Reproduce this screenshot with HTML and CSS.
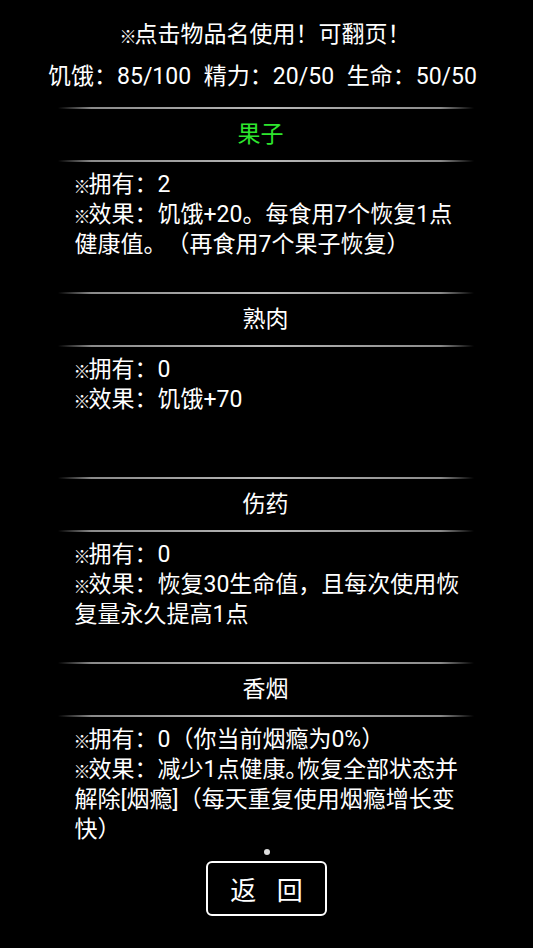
FILE: index.html
```html
<!DOCTYPE html>
<html lang="zh-CN">
<head>
<meta charset="utf-8">
<title>物品</title>
<link rel="stylesheet" href="styles.css">
</head>
<body>
<div class="page">
  <div class="title"><span class="mark">※</span>点击物品名使用！可翻页！</div>
  <div class="stats">饥饿：85/100 精力：20/50 生命：50/50</div>
  <div class="items">
    <section class="item">
      <div class="divider"></div>
      <div class="name green">果子</div>
      <div class="divider"></div>
      <div class="desc">
        <p><span class="mark">※</span>拥有：2</p>
        <p><span class="mark">※</span>效果：饥饿+20。每食用7个恢复1点健康值。（再食用7个果子恢复）</p>
      </div>
    </section>
    <section class="item">
      <div class="divider"></div>
      <div class="name">熟肉</div>
      <div class="divider"></div>
      <div class="desc">
        <p><span class="mark">※</span>拥有：0</p>
        <p><span class="mark">※</span>效果：饥饿+70</p>
      </div>
    </section>
    <section class="item">
      <div class="divider"></div>
      <div class="name">伤药</div>
      <div class="divider"></div>
      <div class="desc">
        <p><span class="mark">※</span>拥有：0</p>
        <p><span class="mark">※</span>效果：恢复30生命值，且每次使用恢复量永久提高1点</p>
      </div>
    </section>
    <section class="item">
      <div class="divider"></div>
      <div class="name">香烟</div>
      <div class="divider"></div>
      <div class="desc">
        <p><span class="mark">※</span>拥有：0（你当前烟瘾为0%）</p>
        <p><span class="mark">※</span>效果：减少1点健康｡恢复全部状态并解除[烟瘾]（每天重复使用烟瘾增长变快）</p>
      </div>
    </section>
  </div>
  <div class="dot"></div>
  <div class="btn-row"><div class="back">返 回</div></div>
</div>
</body>
</html>
```
FILE: styles.css
```css
html, body {
  margin: 0;
  padding: 0;
  background: #000;
}
body {
  width: 533px;
  height: 948px;
  overflow: hidden;
  color: #fff;
  font-family: Roboto, "Noto Sans CJK SC", sans-serif;
  font-size: 23px;
  text-spacing-trim: space-all;
}
.page {
  padding-top: 20px;
  display: flex;
  flex-direction: column;
  align-items: center;
}
.mark {
  display: inline-block;
  width: 14px;
  font-size: 14px;
  line-height: 14px;
  font-weight: bold;
  text-align: center;
  font-family: "Noto Sans CJK SC", sans-serif;
  transform: scale(1.22);
}
.title {
  line-height: 30px;
  text-align: center;
  padding-right: 2px;
}
.stats {
  margin-top: 12px;
  line-height: 30px;
  text-align: center;
  word-spacing: 7px;
  padding-right: 8px;
}
.items {
  margin-top: 15px;
  width: 416px;
  margin-left: -2px;
}
.divider {
  height: 2px;
  background: linear-gradient(to right, rgba(150,150,150,0) 0%, #8a8a8a 8%, #b8b8b8 50%, #8a8a8a 92%, rgba(150,150,150,0) 100%);
}
.name {
  height: 51px;
  line-height: 51px;
  text-align: center;
}
.green {
  color: #2ee62e;
  padding-right: 10px;
}
.desc {
  height: 130px;
  box-sizing: border-box;
  padding: 8px 0 0 17px;
  width: 406px;
}
.desc p {
  margin: 0;
  line-height: 30px;
}
.dot {
  margin-top: 2px;
  width: 6px;
  height: 6px;
  border-radius: 50%;
  background: #ddd;
}
.btn-row {
  margin-top: 6px;
  display: flex;
  justify-content: center;
}
.back {
  width: 121px;
  height: 55px;
  box-sizing: border-box;
  border: 2px solid #fff;
  border-radius: 6px;
  display: flex;
  align-items: center;
  justify-content: center;
  font-size: 26px;
  word-spacing: 14px;
}
```
